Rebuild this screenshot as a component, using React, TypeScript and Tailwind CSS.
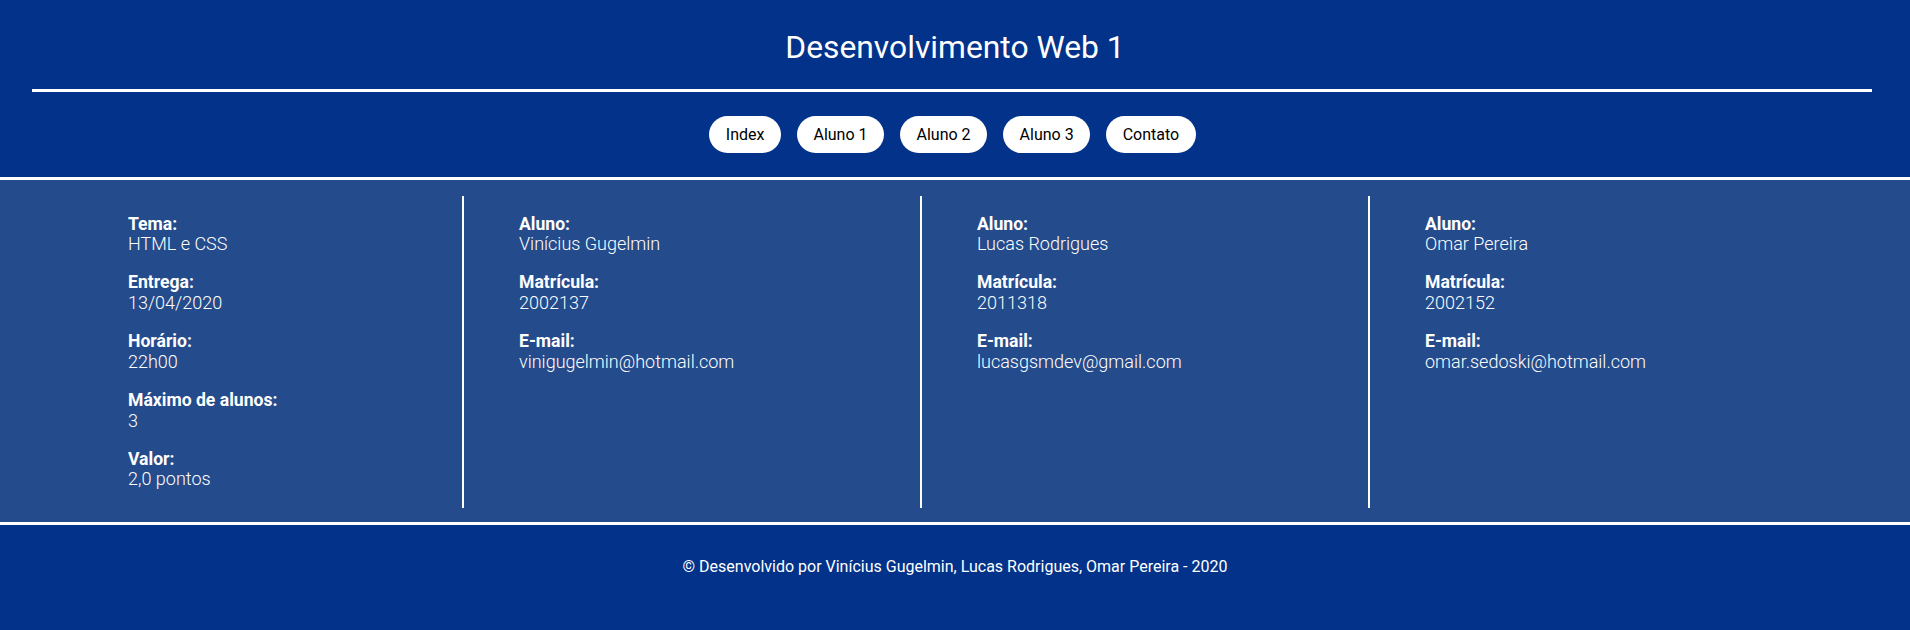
import React from 'react';

interface Info {
  label: string;
  value: string;
}

const tarefa: Info[] = [
  { label: 'Tema:', value: 'HTML e CSS' },
  { label: 'Entrega:', value: '13/04/2020' },
  { label: 'Horário:', value: '22h00' },
  { label: 'Máximo de alunos:', value: '3' },
  { label: 'Valor:', value: '2,0 pontos' },
];

const alunos: Info[][] = [
  [
    { label: 'Aluno:', value: 'Vinícius Gugelmin' },
    { label: 'Matrícula:', value: '2002137' },
    { label: 'E-mail:', value: 'vinigugelmin@hotmail.com' },
  ],
  [
    { label: 'Aluno:', value: 'Lucas Rodrigues' },
    { label: 'Matrícula:', value: '2011318' },
    { label: 'E-mail:', value: 'lucasgsmdev@gmail.com' },
  ],
  [
    { label: 'Aluno:', value: 'Omar Pereira' },
    { label: 'Matrícula:', value: '2002152' },
    { label: 'E-mail:', value: 'omar.sedoski@hotmail.com' },
  ],
];

const links = ['Index', 'Aluno 1', 'Aluno 2', 'Aluno 3', 'Contato'];

// same widths as the original page (first column has no divider)
const colClasses = [
  'w-[458px] border-l-2 border-white pl-[55px]',
  'w-[448px] border-l-2 border-white pl-[55px]',
  'flex-1 border-l-2 border-white pl-[55px]',
];

const Bloco: React.FC<{ items: Info[] }> = ({ items }) => (
  <>
    {items.map((item) => (
      <p key={item.label} className="my-[17.6px] text-[17.6px] leading-[20.6px]">
        <strong className="font-bold">{item.label}</strong>
        <br />
        <span className="text-[18px] font-light">{item.value}</span>
      </p>
    ))}
  </>
);

export default function App() {
  return (
    <div className="min-h-screen bg-[#023289] font-['Roboto',sans-serif] text-white">
      {/* Cabeçalho */}
      <header className="border-b-[3px] border-white">
        <h1 className="pt-[28px] text-center text-[31.8px] font-normal leading-[38px]">
          Desenvolvimento Web 1
        </h1>
        <div className="ml-[32px] mt-[23px] h-[3px] w-[1840px] bg-white" />
        <nav className="flex justify-center gap-4 py-6 pr-[5px]">
          {links.map((link) => (
            <a
              key={link}
              href="#"
              className="flex h-[37px] items-center rounded-full bg-white px-[16.5px] text-[16px] leading-[19px] text-black"
            >
              {link}
            </a>
          ))}
        </nav>
      </header>

      {/* Conteúdo */}
      <main className="flex bg-[#244b8b] pt-4 pb-[14px]">
        <div className="w-[462px] pl-[128px]">
          <Bloco items={tarefa} />
        </div>
        {alunos.map((aluno, i) => (
          <div key={i} className={colClasses[i]}>
            <Bloco items={aluno} />
          </div>
        ))}
      </main>

      {/* Rodapé */}
      <footer className="border-t-[3px] border-white py-8 text-center text-[16px] leading-[19px]">
        © Desenvolvido por Vinícius Gugelmin, Lucas Rodrigues, Omar Pereira - 2020
      </footer>
    </div>
  );
}
